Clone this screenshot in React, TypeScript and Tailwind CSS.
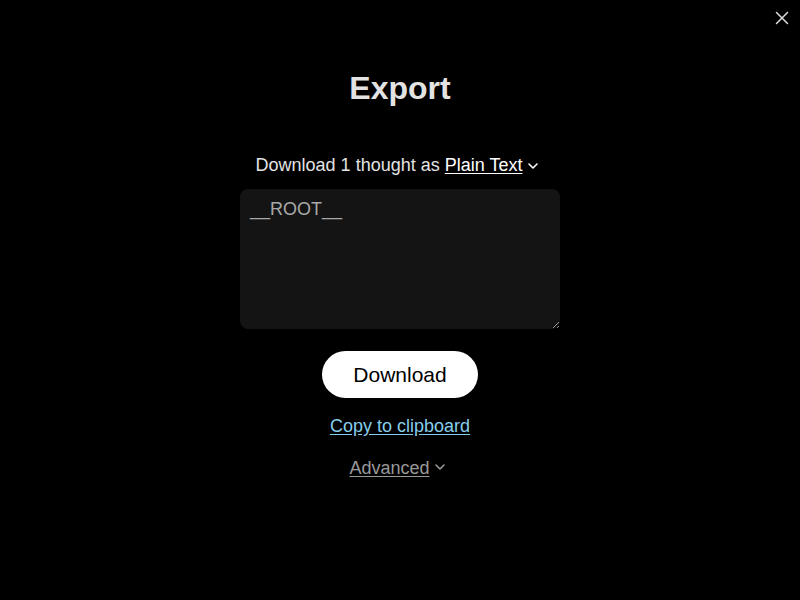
import React from "react";

const Chevron = ({ className }: { className?: string }) => (
  <svg viewBox="0 0 12 12" className={className} fill="none" stroke="currentColor" strokeWidth="1.6" strokeLinecap="round" strokeLinejoin="round">
    <path d="M2 4 L6 8 L10 4" />
  </svg>
);

export default function App() {
  return (
    <div className="relative w-[800px] h-[600px] bg-black text-[#e3e3e3] overflow-hidden" style={{ fontFamily: '"Liberation Sans", Arial, sans-serif' }}>
      <button className="absolute right-[11px] top-[11px] w-[14px] h-[14px] text-[#dddddd]">
        <svg viewBox="0 0 14 14" className="w-[14px] h-[14px]" stroke="currentColor" strokeWidth="1.5" strokeLinecap="round">
          <path d="M1.5 1.5 L12.5 12.5 M12.5 1.5 L1.5 12.5" />
        </svg>
      </button>
      <div className="flex flex-col items-center pt-[69px]">
        <h1 className="text-[32px] leading-[38px] font-bold text-[#e3e3e3]">Export</h1>
        <div className="mt-[47px] flex items-center text-[18px] leading-[22px]">
          <span>Download 1 thought as&nbsp;</span>
          <span className="text-white underline underline-offset-2">Plain Text</span>
          <Chevron className="w-[12px] h-[12px] ml-[5px] mr-[5px] mt-[2px] text-white" />
        </div>
        <textarea
          readOnly
          defaultValue="__ROOT__"
          className="mt-[13px] w-[320px] h-[140px] rounded-[8px] bg-[#141414] text-[#a8a8a8] text-[18px] leading-[22px] px-[10px] py-[9px] outline-none"
          style={{ fontFamily: '"Liberation Sans", Arial, sans-serif' }}
        />
        <button className="mt-[22px] w-[156px] h-[47px] rounded-full bg-white text-black text-[21px]">Download</button>
        <a className="mt-[17px] text-[18px] leading-[22px] text-[#87ceeb] underline underline-offset-2">Copy to clipboard</a>
        <div className="mt-[20px] flex items-center text-[18px] leading-[22px] text-[#999999]">
          <span className="underline underline-offset-2">Advanced</span>
          <Chevron className="w-[12px] h-[12px] ml-[4px] mr-[5px] -mt-[2px]" />
        </div>
      </div>
    </div>
  );
}
